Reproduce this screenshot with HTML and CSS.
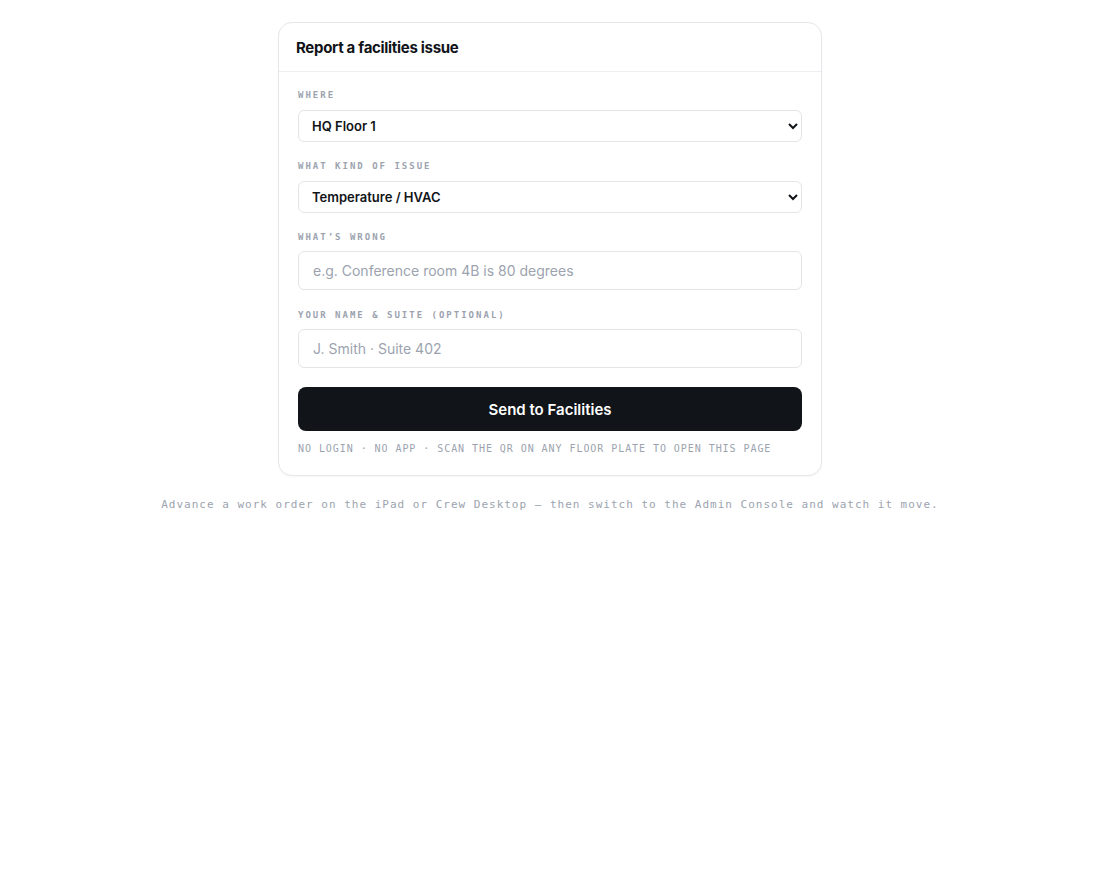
FILE: index.html
```html
<!DOCTYPE html>
<html lang="en">
<head>
<meta charset="utf-8">
<title>Report a facilities issue</title>
<link rel="stylesheet" href="styles.css">
</head>
<body>
<main class="page">
  <section class="card">
    <header class="card-head">
      <h1 class="card-title">Report a facilities issue</h1>
    </header>
    <form class="card-body">
      <div class="field">
        <label class="label" for="where">Where</label>
        <select id="where" class="select">
          <option>HQ Floor 1</option>
          <option>HQ Floor 2</option>
        </select>
      </div>
      <div class="field">
        <label class="label" for="kind">What kind of issue</label>
        <select id="kind" class="select">
          <option>Temperature / HVAC</option>
          <option>Plumbing</option>
        </select>
      </div>
      <div class="field field-text">
        <label class="label" for="wrong">What’s wrong</label>
        <input id="wrong" class="input" type="text" placeholder="e.g. Conference room 4B is 80 degrees">
      </div>
      <div class="field field-text">
        <label class="label" for="who">Your name &amp; suite (optional)</label>
        <input id="who" class="input" type="text" placeholder="J. Smith · Suite 402">
      </div>
      <button type="button" class="submit">Send to Facilities</button>
      <p class="fineprint">No login · no app · scan the QR on any floor plate to open this page</p>
    </form>
  </section>
  <p class="hint">Advance a work order on the iPad or Crew Desktop — then switch to the Admin Console and watch it move.</p>
</main>
</body>
</html>
```
FILE: styles.css
```css
* { box-sizing: border-box; }
html, body { margin: 0; padding: 0; background: #ffffff; }
body { font-family: Inter, "Noto Sans", sans-serif; color: #111418; }
.page {
  padding-top: 22px;
  display: flex;
  flex-direction: column;
  align-items: center;
}
.card {
  width: 544px;
  border: 1px solid #e5e7eb;
  border-radius: 14px;
  background: #fff;
  box-shadow: 0 1px 2px rgba(17, 20, 24, 0.04);
}
.card-head {
  height: 49px;
  border-bottom: 1px solid #eceef1;
  display: flex;
  align-items: center;
  padding: 0 17px;
}
.card-title {
  margin: 0;
  font-size: 15px;
  font-weight: 700;
  letter-spacing: -0.3px;
  color: #111418;
}
.card-body {
  margin: 0;
  padding: 17px 19px 19px;
  display: flex;
  flex-direction: column;
}
.field {
  display: flex;
  flex-direction: column;
  margin-bottom: 18px;
}
.field-text { margin-bottom: 19px; }
.label {
  font-family: "DejaVu Sans Mono", monospace;
  font-size: 9px;
  line-height: 12px;
  font-weight: 700;
  letter-spacing: 2px;
  text-transform: uppercase;
  color: #9ca3af;
  margin-bottom: 9px;
}
.field-text .label { margin-bottom: 8px; }
.select {
  height: 32px;
  border: 1px solid #e3e5e9;
  border-radius: 6px;
  background: #fff;
  font-family: Inter, sans-serif;
  font-size: 13px;
  font-weight: 600;
  color: #111418;
  padding: 0 9px;
}
.input {
  height: 39px;
  border: 1px solid #e3e5e9;
  border-radius: 6px;
  background: #fff;
  font-family: Inter, sans-serif;
  font-size: 14px;
  color: #111418;
  padding: 0 14px;
}
.input::placeholder { color: #9ca3af; }
.submit {
  height: 44px;
  border: 0;
  border-radius: 8px;
  background: #111418;
  color: #fff;
  font-family: Inter, sans-serif;
  font-size: 15px;
  font-weight: 600;
  cursor: pointer;
}
.fineprint {
  margin: 11px 0 0;
  font-family: "DejaVu Sans Mono", monospace;
  font-size: 10px;
  line-height: 14px;
  letter-spacing: 0.94px;
  text-transform: uppercase;
  color: #9ca3af;
}
.hint {
  margin: 21px 0 0;
  font-family: "DejaVu Sans Mono", monospace;
  font-size: 11px;
  line-height: 16px;
  letter-spacing: 1px;
  color: #9ca3af;
  text-align: center;
}
```
